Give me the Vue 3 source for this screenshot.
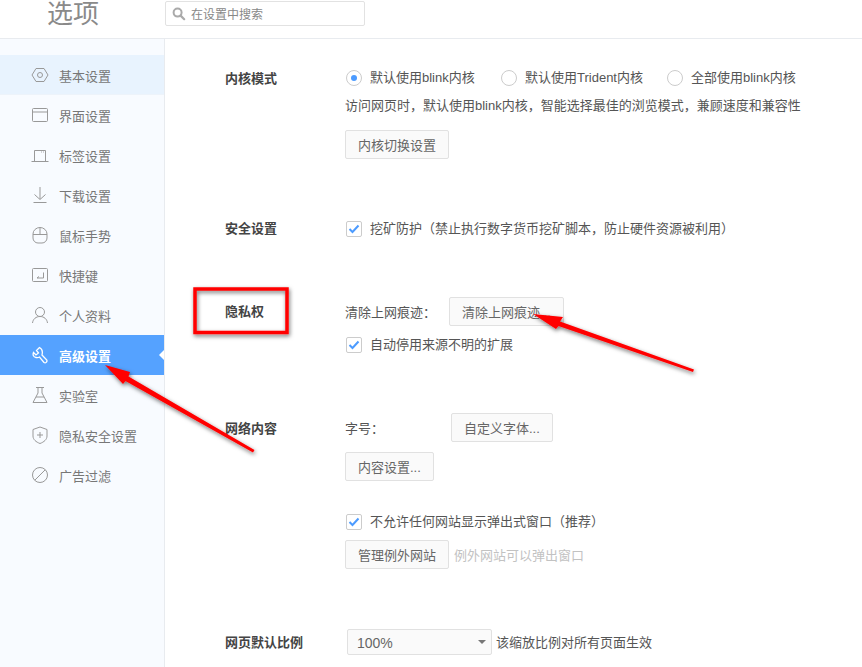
<template>
  <div class="page">
    <header class="top">
      <h1 class="title">选项</h1>
      <div class="search">
        <svg class="search-icon" width="14" height="14" viewBox="0 0 14 14">
          <circle cx="5.6" cy="5.6" r="4" fill="none" stroke="#aaa" stroke-width="2" />
          <path d="M8.6 8.6l3.6 3.6" stroke="#aaa" stroke-width="2.2" stroke-linecap="round" />
        </svg>
        <span>在设置中搜索</span>
      </div>
    </header>

    <div class="body">
      <aside class="sidebar">
        <div
          v-for="item in menu"
          :key="item.name"
          :class="['menu-item', { hover: item.hover, active: item.active }]"
        >
          <svg class="menu-icon" width="18" height="18" viewBox="0 0 18 18" fill="none" stroke="currentColor" stroke-width="1" v-html="item.icon"></svg>
          <span>{{ item.name }}</span>
        </div>
      </aside>

      <main class="content">
        <section class="row row-core">
          <div class="row-label">内核模式</div>
          <div class="row-body">
            <div class="radios">
              <label class="radio-item r1"><i class="radio on"></i>默认使用blink内核</label>
              <label class="radio-item r2"><i class="radio"></i>默认使用Trident内核</label>
              <label class="radio-item"><i class="radio"></i>全部使用blink内核</label>
            </div>
            <p class="desc">访问网页时，默认使用blink内核，智能选择最佳的浏览模式，兼顾速度和兼容性</p>
            <button class="btn">内核切换设置</button>
          </div>
        </section>

        <section class="row row-safe">
          <div class="row-label">安全设置</div>
          <div class="row-body">
            <label class="check-line">
              <i class="check"><svg width="12" height="10" viewBox="0 0 12 10"><path d="M1.5 5l3 3 6-6.5" fill="none" stroke="#4c9bff" stroke-width="2" /></svg></i>挖矿防护（禁止执行数字货币挖矿脚本，防止硬件资源被利用）
            </label>
          </div>
        </section>

        <section class="row row-privacy">
          <div class="row-label">隐私权</div>
          <div class="row-body">
            <div class="inline">
              <span class="field-name w104">清除上网痕迹：</span>
              <button class="btn">清除上网痕迹...</button>
            </div>
            <label class="check-line gap-top">
              <i class="check"><svg width="12" height="10" viewBox="0 0 12 10"><path d="M1.5 5l3 3 6-6.5" fill="none" stroke="#4c9bff" stroke-width="2" /></svg></i>自动停用来源不明的扩展
            </label>
          </div>
        </section>

        <section class="row row-net">
          <div class="row-label">网络内容</div>
          <div class="row-body">
            <div class="inline">
              <span class="field-name w106">字号：</span>
              <button class="btn">自定义字体...</button>
            </div>
            <button class="btn block-btn">内容设置...</button>
            <label class="check-line popup-line">
              <i class="check"><svg width="12" height="10" viewBox="0 0 12 10"><path d="M1.5 5l3 3 6-6.5" fill="none" stroke="#4c9bff" stroke-width="2" /></svg></i>不允许任何网站显示弹出式窗口（推荐）
            </label>
            <div class="inline manage">
              <button class="btn">管理例外网站</button>
              <span class="hint">例外网站可以弹出窗口</span>
            </div>
          </div>
        </section>

        <section class="row row-zoom">
          <div class="row-label">网页默认比例</div>
          <div class="row-body zoom-body">
            <div class="select">100%<i class="caret"></i></div>
            <span>该缩放比例对所有页面生效</span>
          </div>
        </section>
      </main>
    </div>

    <!-- 截图上的红色标注 -->
    <svg class="marks" width="862" height="667" viewBox="0 0 862 667">
      <defs>
        <filter id="soft" x="-20%" y="-20%" width="140%" height="140%">
          <feDropShadow dx="1" dy="2" stdDeviation="2" flood-color="#000" flood-opacity="0.55" />
        </filter>
      </defs>
      <g filter="url(#soft)" fill="#f00">
        <rect x="195" y="289" width="92" height="43.500" fill="none" stroke="#f00" stroke-width="3.500" />
        <path d="M533 314L563 317 560 321.500 694 369.500 693 372 558.500 326 556 329z" />
        <path d="M105 365L130 372 128.500 376.500 254.500 450 253 452.500 125.500 381 123 384z" />
      </g>
    </svg>
  </div>
</template>

<script setup>
const menu = [
  {
    name: "基本设置",
    hover: true,
    icon: '<path d="M5 2.500h8L17 9l-4 6.500H5L1 9z"/><circle cx="9" cy="9" r="2.500"/>',
  },
  {
    name: "界面设置",
    icon: '<rect x="1.500" y="2.500" width="15" height="13" rx="1"/><path d="M1.500 6h15"/>',
  },
  {
    name: "标签设置",
    icon: '<path d="M3.500 15V4.500h11V15M0.500 15.500h17M10 6h.8M12 6h.8"/>',
  },
  {
    name: "下载设置",
    icon: '<path d="M9 1v12M3.500 8.500L9 13.500l5.500-5M2.500 16.500h13"/>',
  },
  {
    name: "鼠标手势",
    icon: '<path d="M2 8a7 6.500 0 0 1 14 0v4a5 5 0 0 1-5 5H7a5 5 0 0 1-5-5zM2 8.500h14M9 1.500v7"/>',
  },
  {
    name: "快捷键",
    icon: '<rect x="1.500" y="2.500" width="15" height="13" rx="1"/><path d="M12.500 6.500v5.500H6M6 12l2-1.500"/>',
  },
  {
    name: "个人资料",
    icon: '<circle cx="9" cy="6" r="4.500"/><path d="M1.500 17c.5-4 3.500-6.500 7.500-6.500s7 2.500 7.500 6.500"/>',
  },
  {
    name: "高级设置",
    active: true,
    icon: '<path stroke-width="1.300" d="M8.500 1.500L5.500 4.500 7.500 7 5 9 2.500 6.500C1.500 9 2.500 11 5 11.500 6.500 11.800 7.500 11.500 8.500 11L13 16.500C14.500 17.500 16.500 16 15.800 14L11 9C12 5 10.500 2.500 8.500 1.500z"/>',
  },
  {
    name: "实验室",
    icon: '<path d="M5 1.500h8M7 1.500v5.500L2 16.500h14L11 7V1.500M5 11h8"/>',
  },
  {
    name: "隐私安全设置",
    icon: '<path d="M9 1l7 2.500v6.500c0 3.500-3 6-7 7.500C5 16 2 13.500 2 10V3.500zM9 6v6M6 9h6"/>',
  },
  {
    name: "广告过滤",
    icon: '<circle cx="9" cy="9" r="7.500"/><path d="M3.800 14.200L14.200 3.800"/>',
  },
];
</script>

<style scoped>
.page {
  position: relative;
  width: 862px;
  height: 667px;
  overflow: hidden;
  background: #fff;
  color: #555;
  font-family: "Liberation Sans", "Noto Sans CJK SC", sans-serif;
  font-size: 13px;
}

.top {
  display: flex;
  height: 38px;
  border-bottom: 1px solid #e8ebef;
}

.title {
  width: 118px;
  margin: 0 0 0 47px;
  padding-top: 1px;
  font-size: 26px;
  font-weight: 400;
  line-height: 26px;
  color: #8a8a8a;
}

.search {
  display: flex;
  align-items: center;
  width: 198px;
  height: 23px;
  margin-top: 1px;
  border: 1px solid #e2e2e2;
  border-radius: 2px;
  font-size: 12px;
  color: #888;
}

.search-icon {
  margin: 0 5px 0 6px;
}

.body {
  display: flex;
  height: 628px;
}

.sidebar {
  width: 164px;
  flex-shrink: 0;
  padding-top: 16px;
  box-sizing: content-box;
  background: #f8fbff;
  border-right: 1px solid #e8ebef;
}

.menu-item {
  position: relative;
  display: flex;
  align-items: center;
  height: 40px;
  padding-left: 31px;
  color: #777;
}

.menu-icon {
  margin-right: 10px;
  color: #999;
}

.menu-item.hover {
  background: #e8f3fe;
  box-shadow: inset 0 -1px 0 #edf3fa;
}

.menu-item.active {
  background: #55a2ff;
  color: #fff;
  font-weight: 700;
}

.menu-item.active .menu-icon {
  color: #fff;
}

.menu-item.active::after {
  content: "";
  position: absolute;
  right: 0;
  top: 15px;
  border: 5px solid transparent;
  border-right-color: #fff;
  border-left-width: 0;
}

.content {
  flex: 1;
  padding-left: 60px;
}

.row {
  display: flex;
}

.row-label {
  width: 120px;
  flex-shrink: 0;
  padding-top: 1px;
  font-weight: 700;
  color: #444;
  line-height: 20px;
}

.row-core {
  padding-top: 29px;
}

.radios {
  display: flex;
  height: 20px;
  align-items: center;
}

.radio-item,
.check-line {
  display: flex;
  align-items: center;
  line-height: 20px;
}

.r1 {
  width: 155px;
}

.r2 {
  width: 166px;
}

.radio {
  width: 14px;
  height: 14px;
  margin: 0 8px 0 1px;
  border: 1px solid #ccc;
  border-radius: 50%;
  background: #fff;
  display: flex;
  align-items: center;
  justify-content: center;
}

.radio.on::after {
  content: "";
  width: 6px;
  height: 6px;
  border-radius: 50%;
  background: #4c9bff;
}

.desc {
  margin: 8px 0 0;
  line-height: 20px;
}

.btn {
  display: block;
  height: 29px;
  padding: 0 12px;
  border: 1px solid #e1e1e1;
  border-radius: 2px;
  background: #fafafa;
  color: #666;
  font: inherit;
  white-space: nowrap;
}

.row-core .btn {
  margin-top: 14px;
}

.row-safe {
  margin-top: 60px;
}

.row-safe .row-label {
  height: 20px;
  padding-top: 0;
}

.check {
  display: flex;
  align-items: center;
  justify-content: center;
  width: 14px;
  height: 14px;
  margin: 0 8px 0 1px;
  border: 1px solid #ccc;
  border-radius: 2px;
  background: #fff;
}

.row-privacy {
  margin-top: 58px;
}

.row-privacy .row-label {
  padding-top: 5px;
}

.inline {
  display: flex;
  align-items: center;
}

.field-name.w104 {
  width: 104px;
}

.field-name.w106 {
  width: 106px;
}

.gap-top {
  margin-top: 9px;
}

.row-net {
  margin-top: 58px;
}

.row-net .row-label {
  padding-top: 6px;
}

.block-btn {
  margin-top: 10px;
}

.popup-line {
  margin-top: 31px;
}

.manage {
  margin-top: 8px;
}

.hint {
  margin-left: 5px;
  color: #c2c2c2;
}

.row-zoom {
  margin-top: 60px;
}

.row-zoom .row-label {
  padding-top: 0;
  line-height: 28px;
}

.zoom-body {
  display: flex;
  align-items: flex-start;
  line-height: 28px;
}

.select {
  position: relative;
  width: 145px;
  height: 26px;
  margin: 0 4px 0 2px;
  padding-left: 9px;
  box-sizing: border-box;
  border: 1px solid #e1e1e1;
  border-radius: 2px;
  background: #fafafa;
  line-height: 26px;
  font-size: 14px;
  color: #666;
}

.caret {
  position: absolute;
  right: 5px;
  top: 10px;
  border: 4px solid transparent;
  border-top: 4px solid #777;
  border-bottom-width: 0;
}

.marks {
  position: absolute;
  left: 0;
  top: 0;
  pointer-events: none;
}
</style>
